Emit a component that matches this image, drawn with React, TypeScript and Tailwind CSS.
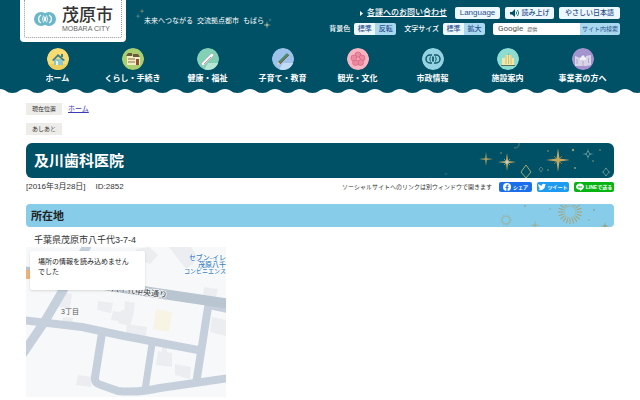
import type { ReactNode } from "react";

type NavItem = { label: string; color: string; art: ReactNode };

const navItems: NavItem[] = [
  {
    label: "ホーム",
    color: "#f8dc72",
    art: (
      <>
        <path d="M0 16h22v6H0z" fill="#efcf5c" />
        <path d="M7 11h9v6H7z" fill="#8fc7c9" />
        <path d="M5 12l6-6 7 6-1.500 1-5.500-4.500L6.500 13z" fill="#3f7f8c" />
        <path d="M14 6h2v3h-2z" fill="#3f7f8c" />
        <path d="M9 13h2v4H9z" fill="#e9f3ee" />
      </>
    ),
  },
  {
    label: "くらし・手続き",
    color: "#a9cf71",
    art: (
      <>
        <path d="M5 8h13v9H5z" fill="#f1edc5" />
        <path d="M4 8l2-3h4v3zM11 6h5l2 3h-7z" fill="#6b5a3a" />
        <path d="M6 11h7M6 14h7" stroke="#8b6f48" />
        <path d="M14 11h3v6h-3z" fill="#93502f" />
      </>
    ),
  },
  {
    label: "健康・福祉",
    color: "#83d0b4",
    art: (
      <>
        <path d="M11 15h11l-4 7H7z" fill="#b6e6d6" />
        <path d="M6 16L15 7" stroke="#7c9a98" strokeWidth="3.600" strokeLinecap="round" />
        <path d="M6 16L15 7" stroke="#ffffff" strokeWidth="3" strokeLinecap="round" />
        <path d="M7 16l7-7" stroke="#c4747c" strokeWidth="0.800" />
      </>
    ),
  },
  {
    label: "子育て・教育",
    color: "#9cc2ec",
    art: (
      <>
        <path d="M11 15h11l-4 7H7z" fill="#c3dcf5" />
        <path d="M7 15L16 6" stroke="#4d8a6b" strokeWidth="3" />
        <path d="M8 16L17 7" stroke="#8b5b45" />
        <path d="M5 17l1-3 2 2z" fill="#e8cfa4" />
      </>
    ),
  },
  {
    label: "観光・文化",
    color: "#f9b3c1",
    art: (
      <g fill="#ee8aa0" stroke="#d0607e" strokeWidth="0.600">
        <circle cx="11" cy="7" r="3" />
        <circle cx="15" cy="10" r="3" />
        <circle cx="13.500" cy="14.500" r="3" />
        <circle cx="8.500" cy="14.500" r="3" />
        <circle cx="7" cy="10" r="3" />
        <circle cx="11" cy="11" r="2" fill="#f5a5b6" />
      </g>
    ),
  },
  {
    label: "市政情報",
    color: "#93d3e2",
    art: (
      <g fill="none" stroke="#12596a" strokeWidth="1.500">
        <path d="M10 7H8a4 4 0 1 0 0 8h2M12 7h2a4 4 0 1 1 0 8h-2" />
        <path d="M8.500 8.500q-1.500 2.500 0 5M13.500 8.500q1.500 2.500 0 5" strokeWidth="1" />
        <path d="M11 8.500v5" strokeWidth="1.800" />
      </g>
    ),
  },
  {
    label: "施設案内",
    color: "#8cdcd2",
    art: (
      <>
        <path d="M8 7h7v10H8zM5 10h3v7H5zM15 10h2v7h-2z" fill="#f3e7a5" />
        <path d="M9 7v9M11.500 5v11M14 7v9" stroke="#b2a266" strokeWidth="0.600" />
        <path d="M4 17h14v1H4z" fill="#56705f" />
      </>
    ),
  },
  {
    label: "事業者の方へ",
    color: "#a394cf",
    art: (
      <>
        <path d="M3 8l5 2v8H3zM14 8l5-1v10l-5 1zM8 11h6v7H8z" fill="#d9d5e6" />
        <path d="M8 10l3-3 3 3v2H8z" fill="#f2eff8" />
        <path d="M5 11v5M16.500 10v5M11 13v5" stroke="#a79dbf" strokeWidth="0.800" />
      </>
    ),
  },
];

function Emblem() {
  return (
    <svg viewBox="0 0 22 14" className="h-3.5 w-[22px]" aria-hidden="true">
      <circle cx="7" cy="7" r="7" fill="#69b7c8" />
      <circle cx="15" cy="7" r="7" fill="#69b7c8" />
      <path d="M7 3a4.500 4.500 0 0 0 0 8M15 3a4.500 4.500 0 0 1 0 8" fill="none" stroke="#fff" strokeWidth="1.300" />
      <path d="M9.500 3.500q-2 3.500 0 7M12.500 3.500q2 3.500 0 7" fill="none" stroke="#fff" strokeWidth="0.900" />
      <path d="M11 4c-1.500 2-1.500 4 0 6 1.500-2 1.500-4 0-6z" fill="#fff" />
    </svg>
  );
}

function Star({ x, y, r, color = "#c7a860" }: { x: number; y: number; r: number; color?: string }) {
  const k = r / 8;
  return (
    <path
      d={`M${x} ${y - r}L${x + k} ${y - k}L${x + r} ${y}L${x + k} ${y + k}L${x} ${y + r}L${x - k} ${y + k}L${x - r} ${y}L${x - k} ${y - k}Z`}
      fill={color}
    />
  );
}

function Wave() {
  return (
    <svg className="block h-1.5 w-full" aria-hidden="true">
      <defs>
        <pattern id="wave" width="25" height="6" patternUnits="userSpaceOnUse">
          <path d="M0 0H25V1C19 1 19 5 12.500 5C6 5 6 1 0 1Z" fill="#005066" />
        </pattern>
      </defs>
      <rect width="100%" height="6" fill="url(#wave)" />
    </svg>
  );
}

function ToggleGroup({ label, first, second }: { label: string; first: string; second: string }) {
  return (
    <div className="flex items-center gap-1" role="group" aria-label={label}>
      <span className="text-[7px] font-medium">{label}</span>
      <div className="flex h-3 overflow-hidden rounded-xs text-[7px] font-medium text-[#2c4f8e]">
        <button type="button" className="w-[21px] bg-[#edf8fd]">{first}</button>
        <button type="button" className="w-[21px] bg-[#a8d9ef]">{second}</button>
      </div>
    </div>
  );
}

function Header() {
  return (
    <header>
      <div className="bg-[#005066] text-white">
        <div className="mx-5 flex h-[42px] items-start">
          <a href="#" className="h-[42px] rounded-b bg-white px-1 pb-1 text-[#333]">
            <span className="flex h-[38px] w-[98px] items-center gap-1.5 rounded-b-xs border border-t-0 border-dotted border-[#999] pl-[9px]">
              <Emblem />
              <span className="flex flex-col pt-px">
                <span className="text-[17px] leading-[18px] font-medium">茂原市</span>
                <span className="text-[7px] leading-[7px] text-[#666]">MOBARA CITY</span>
              </span>
            </span>
          </a>
          <div className="mt-1.5 ml-2 flex items-start">
            <svg viewBox="0 0 10 14" className="h-3.5 w-2.5" aria-hidden="true">
              <Star x={4} y={10} r={3} color="#6f9a96" />
              <Star x={8} y={5} r={3} color="#9c9a63" />
            </svg>
            <p className="mt-[9px] flex gap-1 text-[7px] leading-3 whitespace-nowrap">
              <span>未来へつながる</span>
              <span>交流拠点都市</span>
              <span>もばら</span>
            </p>
            <svg viewBox="0 0 8 12" className="mt-3 h-3 w-2" aria-hidden="true">
              <Star x={3} y={7} r={4} color="#d8d5a8" />
              <Star x={6} y={2} r={2} color="#7ba39b" />
            </svg>
          </div>
          <div className="ml-auto flex flex-col items-end gap-1 pt-[7px]">
            <div className="flex h-3 items-center gap-[5px] text-[7px] font-medium text-[#2c4f8e]">
              <a href="#" className="mr-[3px] flex items-center gap-1 text-[8px] text-white">
                <svg viewBox="0 0 3 5" className="h-[5px] w-[3px]" aria-hidden="true">
                  <path d="M0 0l3 2.500L0 5z" fill="#fff" />
                </svg>
                <span className="underline">各課へのお問い合わせ</span>
              </a>
              <button type="button" className="h-3 w-[45px] rounded-xs bg-[#edf8fd] text-[8px] leading-3">Language</button>
              <button type="button" className="flex h-3 w-[49px] items-center justify-center gap-[3px] rounded-xs bg-[#edf8fd] leading-3">
                <svg viewBox="0 0 9 8" className="h-2 w-[9px]" aria-hidden="true">
                  <path d="M0 3h2l3-3v8L2 5.500H0z" fill="#005066" />
                  <path d="M6 2.500q1.500 1.500 0 3M7.500 1q2.500 3 0 6" fill="none" stroke="#005066" strokeWidth="0.800" />
                </svg>
                <span>読み上げ</span>
              </button>
              <a href="#" className="h-3 w-[61px] rounded-xs bg-[#edf8fd] text-center leading-3">やさしい日本語</a>
            </div>
            <div className="flex h-3 items-center gap-2">
              <ToggleGroup label="背景色" first="標準" second="反転" />
              <ToggleGroup label="文字サイズ" first="標準" second="拡大" />
              <form className="flex h-3 overflow-hidden rounded-xs" onSubmit={(e) => e.preventDefault()}>
                <label className="flex w-[87px] items-center gap-1 bg-white pl-[5px] whitespace-nowrap text-[#555]">
                  <span className="font-['Roboto','Noto_Sans_CJK_JP',sans-serif] text-[8px] leading-3">Google</span>
                  <span className="text-[5px] leading-3">提供</span>
                  <input type="text" aria-label="サイト内検索" className="h-3 w-full min-w-0 text-[8px] outline-none" />
                </label>
                <button type="submit" className="w-10 bg-[#a8d9ef] text-[6px] text-[#2c4f8e]">サイト内検索</button>
              </form>
            </div>
          </div>
        </div>
        <nav className="mx-5 grid grid-cols-8 pt-1.5 pb-1">
          {navItems.map((item) => (
            <a key={item.label} href="#" className="flex flex-col items-center gap-1 text-[8px] leading-[10px] font-bold whitespace-nowrap">
              <svg viewBox="0 0 22 22" className="size-[22px] rounded-full" aria-hidden="true">
                <circle cx="11" cy="11" r="11" fill={item.color} />
                {item.art}
              </svg>
              {item.label}
            </a>
          ))}
        </nav>
      </div>
      <Wave />
    </header>
  );
}

function TitleStars() {
  return (
    <svg viewBox="5 0 170 35" className="h-[35px] w-[170px]" aria-hidden="true">
      <Star x={7} y={31} r={2} color="#4c8389" />
      <Star x={47} y={16} r={7} color="#a99b61" />
      <Star x={68} y={19} r={9} />
      <path d="M65 16l6 6M71 16l-6 6" stroke="#8faaa0" strokeWidth="0.800" />
      <circle cx="68" cy="19" r="1.500" fill="#c7d1ca" />
      <path d="M87 22l5 7-5 6-5-6z" fill="none" stroke="#9fa878" />
      <path d="M75 5q6 0 5-5M102 24l2 2-2 3-2-3z" fill="none" stroke="#668b7c" strokeWidth="0.800" />
      <Star x={119} y={17} r={12} />
      <path d="M115 13l8 8M123 13l-8 8" stroke="#bd9d58" strokeWidth="0.600" />
      <Star x={149} y={11} r={6} color="#71a4a8" />
      <path d="M149 8l2 3-2 3-2-3z" fill="#005066" stroke="#9ab9b5" strokeWidth="0.600" />
      <Star x={167} y={29} r={5} color="#88a99f" />
      <path d="M167 25l3 4-3 4-3-4z" fill="#005066" stroke="#9ab9a5" strokeWidth="0.600" />
      <g fill="#9d986a">
        <circle cx="62" cy="10" r="0.800" />
        <circle cx="109" cy="8" r="0.800" />
        <circle cx="134" cy="7" r="1.200" />
        <circle cx="136" cy="25" r="1" />
        <circle cx="109" cy="27" r="0.800" />
        <circle cx="154" cy="18" r="0.800" />
        <circle cx="161" cy="7" r="0.800" />
      </g>
    </svg>
  );
}

function Sunburst() {
  const rays = Array.from({ length: 20 }, (_, i) => i * 18);
  return (
    <svg viewBox="0 0 120 22" className="h-[22px] w-[120px]" aria-hidden="true">
      <g stroke="#a5a174" strokeWidth="1">
        {rays.map((a) => (
          <path key={a} d="M76 0V-5" transform={`rotate(${a} 76 7)`} />
        ))}
      </g>
      <circle cx="76" cy="7" r="6" fill="none" stroke="#b1a779" strokeWidth="0.600" />
      <circle cx="12" cy="15" r="4" fill="none" stroke="#9dae98" strokeWidth="0.800" />
      <circle cx="12" cy="15" r="5" fill="none" stroke="#9dae98" strokeWidth="1" strokeDasharray="1 1.500" />
      <Star x={41} y={20} r={5} color="#a2ae8d" />
      <Star x={111} y={21} r={4} color="#a28f55" />
      <g fill="#8fa895">
        <circle cx="31" cy="1" r="1" />
        <circle cx="56" cy="4" r="0.800" />
        <circle cx="95" cy="15" r="0.800" />
        <circle cx="100" cy="5" r="1" />
      </g>
    </svg>
  );
}

function ShareButtons() {
  return (
    <div className="flex gap-[5px] font-bold text-white">
      <button type="button" className="flex h-2.5 w-[33px] items-center justify-center gap-0.5 rounded-xs bg-[#1b6fe8] text-[5px] leading-[10px]">
        <svg viewBox="0 0 8 8" className="size-2" aria-hidden="true">
          <circle cx="4" cy="4" r="4" fill="#fff" />
          <path d="M4 8V3q0-1 1.500-1M2.500 4.500h3" fill="none" stroke="#1b6fe8" strokeWidth="1.200" />
        </svg>
        シェア
      </button>
      <button type="button" className="flex h-2.5 w-8 items-center justify-center gap-px rounded-xs bg-[#1d9bf0] text-[5px] leading-[10px]">
        <svg viewBox="0 0 24 24" className="size-2" aria-hidden="true">
          <path
            d="M24 4.500a10 10 0 0 1-2.800.8 5 5 0 0 0 2.100-2.700 10 10 0 0 1-3.100 1.200 4.900 4.900 0 0 0-8.400 4.500A14 14 0 0 1 1.700 3.100a4.900 4.900 0 0 0 1.500 6.600 5 5 0 0 1-2.200-.6 4.900 4.900 0 0 0 3.900 4.900 5 5 0 0 1-2.200.1 4.900 4.900 0 0 0 4.600 3.400A10 10 0 0 1 0 19.500a14 14 0 0 0 21.500-12.400A10 10 0 0 0 24 4.500z"
            fill="#fff"
          />
        </svg>
        ツイート
      </button>
      <button type="button" className="flex h-2.5 w-10 items-center justify-center gap-0.5 rounded-xs bg-[#08b414] text-[5px] leading-[10px] whitespace-nowrap">
        <svg viewBox="0 0 8 8" className="size-2" aria-hidden="true">
          <path d="M4 0.500c2.200 0 4 1.300 4 3.200S5.500 7 4 8V6.800C1.800 6.800 0 5.500 0 3.700S1.800.5 4 .5z" fill="#fff" />
          <path d="M2 4h4" stroke="#08b414" />
        </svg>
        LINEで送る
      </button>
    </div>
  );
}

function AreaMap() {
  return (
    <div className="relative w-[200px]">
      <svg viewBox="0 0 200 150" className="block w-full" role="img" aria-label="地図">
        <rect width="200" height="150" fill="#f7f8f9" />
        <g fill="#ebedf0">
          <path d="M35 45l11 2-2 15-11-2zM72 54l15 2-2 10-14-3zM110 2l13-2 9 8-8 9-14-5zM143 0h22l8 12-13 10zM87 64l13 2-2 9-13-2zM37 70l10 1-1 10-10-2zM99 54l10 2-2 14-9-2zM52 128l14 2-1 10-15-2zM101 77l20 3-1 10-20-4zM95 63l13 2-4 14-12-3zM132 104l14 2v14l-16-2zM149 117l16 3-1 12-15-4zM186 70l14 3v16l-16-4zM178 40l14 2-2 8-13-2zM136 100l5 1v6h-5z" />
        </g>
        <path d="M130 62l16 3-3 20-16-3z" fill="#f8f4e3" />
        <g fill="none" stroke="#c6d0dc" strokeWidth="9" strokeLinejoin="round">
          <path d="M62 -3L36 45 19 74-4 108" />
          <path d="M-4 73L56 80 98 89 172 103" strokeWidth="8" />
          <path d="M76 86L69 130Q68 136 75 138L92 144Q112 146 134 141L204 131" strokeWidth="8" />
          <path d="M126 97L119 143" strokeWidth="7" />
          <path d="M183 54L170 137" strokeWidth="8" />
          <path d="M185 60L204 64" strokeWidth="5" />
        </g>
        <path d="M-4 24L90 40 204 57" fill="none" stroke="#b9c5d1" strokeWidth="10" />
        <text
          x="85"
          y="44"
          transform="rotate(7 85 44)"
          fontSize="8"
          fontWeight="500"
          fill="#4b5258"
          stroke="#fff"
          strokeWidth="1.500"
          paintOrder="stroke"
        >
          八千代中央通り
        </text>
        <text x="35" y="67" fontSize="7" fill="#555">3丁目</text>
        <g fill="#3d82c4" fontWeight="500" textAnchor="end" stroke="#fff" strokeWidth="1" paintOrder="stroke">
          <text x="200" y="13" fontSize="7">セブン-イレ</text>
          <text x="200" y="20" fontSize="7">茂原八千</text>
          <text x="200" y="26" fontSize="6">コンビニエンス</text>
        </g>
        <path d="M0 23h4v9H0z" fill="#f0b27c" />
      </svg>
      <div className="absolute top-1 left-1 h-[39px] w-[115px] rounded-xs bg-white py-1.5 pr-4 pl-2 text-[7px] leading-[10px] text-[#222] shadow">
        場所の情報を読み込めません
        <br />
        でした
      </div>
    </div>
  );
}

export default function App() {
  return (
    <div className="min-h-screen bg-white font-['Liberation_Sans','Noto_Sans_CJK_JP',sans-serif] text-[#333]">
      <Header />
      <main className="px-[26px] pt-[9px]">
        <nav className="flex flex-col items-start gap-2 text-[6px] leading-3">
          <div className="flex items-center gap-1.5">
            <span className="w-9 bg-[#edece8] text-center">現在位置</span>
            <a href="#" className="text-[7px] text-[#3b3bb5] underline">ホーム</a>
          </div>
          <span className="w-9 bg-[#edece8] text-center">あしあと</span>
        </nav>
        <div className="mt-2 flex h-[35px] items-center justify-between overflow-hidden rounded-md bg-[#005066] pl-2 text-white">
          <h1 className="text-[15px] leading-5 font-bold">及川歯科医院</h1>
          <TitleStars />
        </div>
        <div className="flex h-[18px] items-center text-[8px]">
          <span>[2016年3月28日]</span>
          <span className="ml-2.5">ID:2852</span>
          <span className="mr-[7px] ml-auto text-[6px]">ソーシャルサイトへのリンクは別ウィンドウで開きます</span>
          <ShareButtons />
        </div>
        <section className="mt-2">
          <div className="flex h-[23px] items-center justify-between overflow-hidden rounded-sm bg-[#87cce9] pl-[5px]">
            <h2 className="text-[11px] leading-4 font-bold text-[#222]">所在地</h2>
            <Sunburst />
          </div>
          <p className="mt-[7px] pl-2 text-[9px] leading-[13px]">千葉県茂原市八千代3-7-4</p>
          <AreaMap />
        </section>
      </main>
    </div>
  );
}
